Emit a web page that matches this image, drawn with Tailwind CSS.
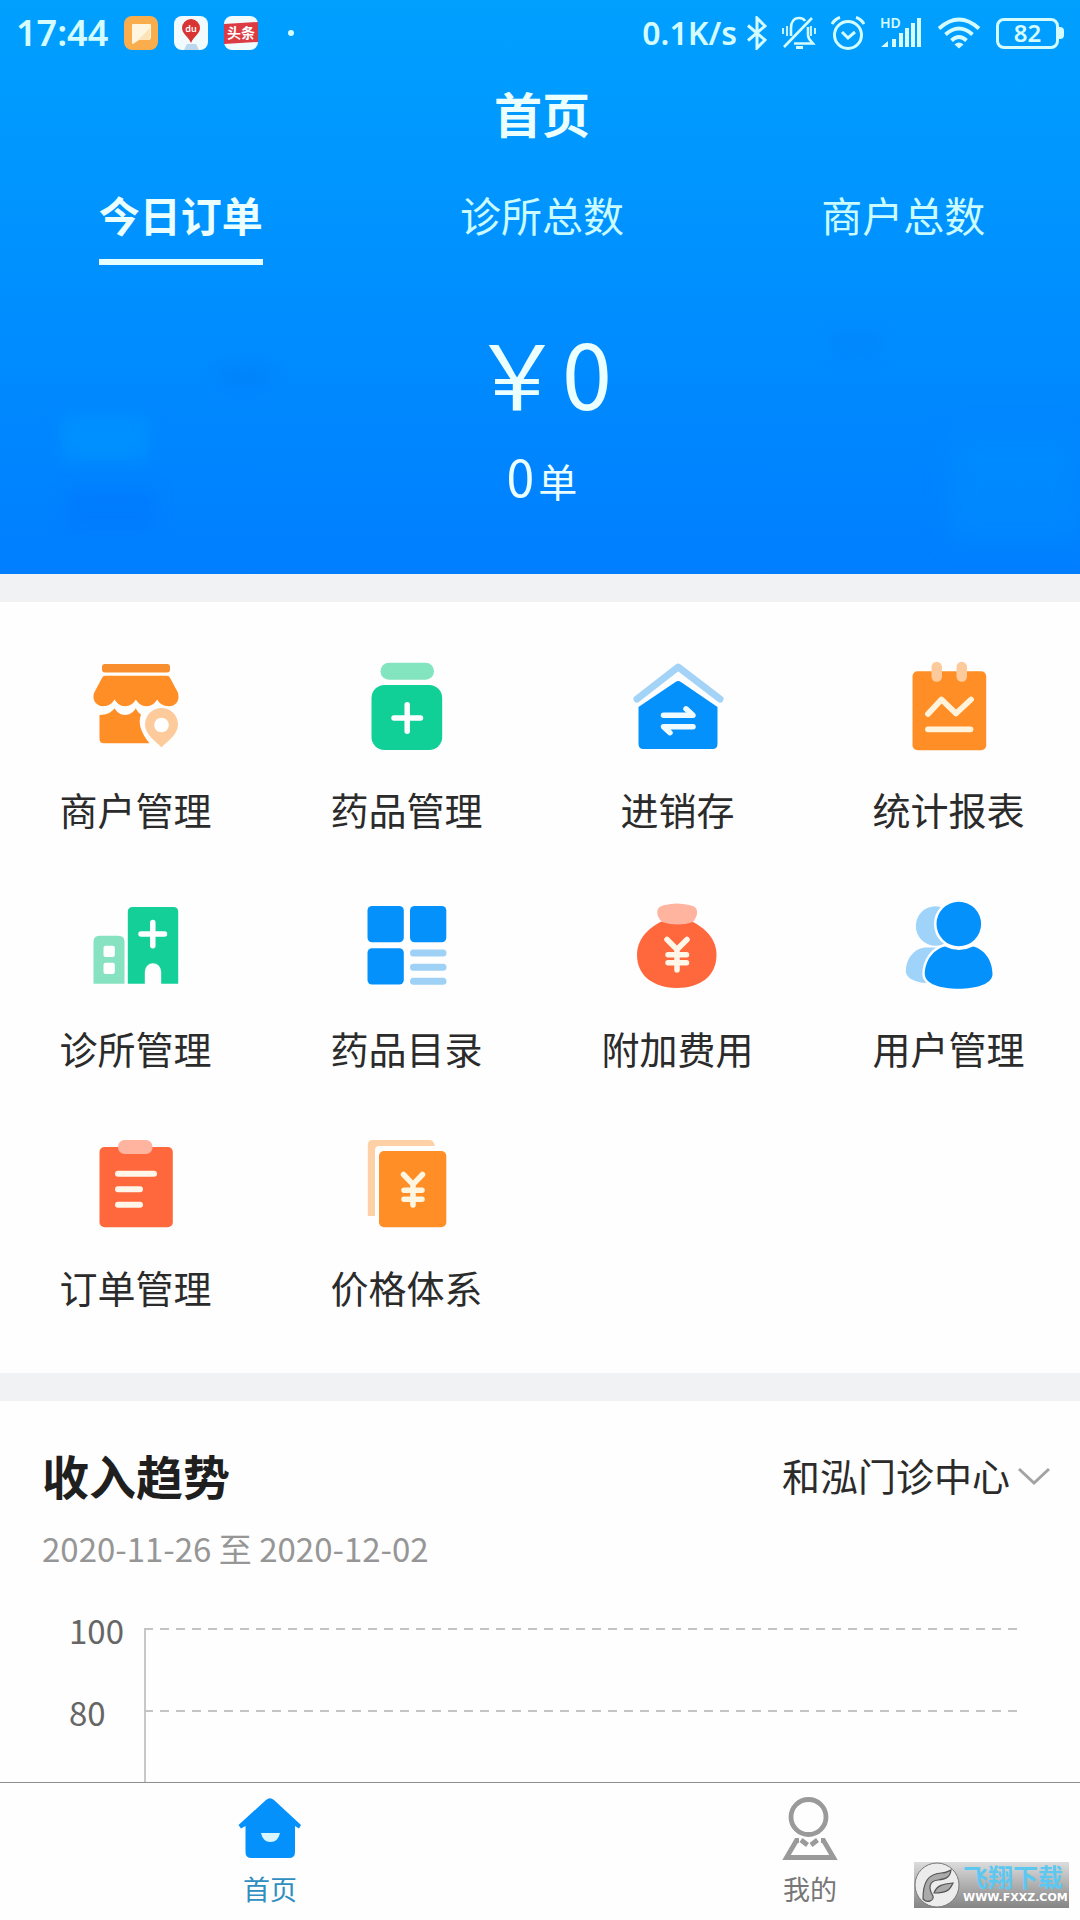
<!DOCTYPE html>
<html lang="zh-CN">
<head>
<meta charset="utf-8">
<meta name="viewport" content="width=device-width, initial-scale=1">
<title>首页</title>
<script src="https://cdn.jsdelivr.net/npm/@tailwindcss/browser@4"></script>
</head>
<body class="flex h-screen flex-col overflow-hidden bg-[#fefefe] font-['Noto_Sans_CJK_SC',sans-serif] text-[#2b2b2b]">

<header class="relative shrink-0 overflow-hidden bg-linear-to-b from-[#00a0ff] to-[#007eff] pb-[58px] text-[#ebffff]">
  <!-- soft cloud shapes behind the totals -->
  <div class="absolute top-[416px] left-[62px] h-[44px] w-[86px] bg-[#0094ff]/70 blur-sm"></div>
  <div class="absolute top-[490px] left-[66px] h-[40px] w-[90px] bg-[#0078ff]/60 blur-sm"></div>
  <div class="absolute top-[366px] left-[218px] h-[24px] w-[52px] bg-[#007dfa]/50 blur-sm"></div>
  <div class="absolute top-[332px] right-[198px] h-[20px] w-[50px] bg-[#0082fa]/50 blur-sm"></div>
  <div class="absolute top-[434px] right-0 h-[106px] w-[130px] bg-[#0090ff]/50 blur-md"></div>

  <!-- status bar -->
  <div class="relative flex h-[66px] items-center justify-between px-4 font-['Noto_Sans',sans-serif] font-semibold text-[#d4fcff]">
    <div class="flex items-center gap-4">
      <span class="text-[36px] leading-[40px]">17:44</span>
      <svg class="size-[34px]" viewBox="0 0 34 34"><rect width="34" height="34" rx="8" fill="#f9ad4c"/><path d="M8 9q0-1 1-1h17q1 0 1 1v12q0 3-3 3h-9l-6 4q-1 0-1-1z" fill="#fff6e2"/><path d="M26 12v9q0 3-3 3h-9z" fill="#fde3b8"/></svg>
      <svg class="size-[34px]" viewBox="0 0 34 34"><rect width="34" height="34" rx="8" fill="#f1fafd"/><path d="M13 28h9l3 6H10z" fill="#bcd6ee"/><path d="M17 27C15 21 8 18 8 12a9 9 0 0 1 18 0c0 6-7 9-9 15z" fill="#d93434"/><text x="17" y="16" text-anchor="middle" font-size="9" font-family="Noto Sans, sans-serif" fill="#fff">du</text></svg>
      <svg class="size-[34px]" viewBox="0 0 34 34"><rect width="34" height="34" rx="8" fill="#f1fafd"/><path d="M0 8 34 6v20L0 28z" fill="#dc3b44"/><text x="17" y="22" text-anchor="middle" font-size="14" font-weight="700" font-family="Noto Sans CJK SC, sans-serif" fill="#fff">头条</text></svg>
      <span class="ml-[14px] size-[6px] rounded-full bg-[#d4fcff]"></span>
    </div>
    <div class="flex items-center gap-[15px]">
      <div class="flex items-center gap-[10px]">
        <span class="text-[32px] leading-[40px]">0.1K/s</span>
        <svg class="h-[34px] w-5" viewBox="0 0 20 34" fill="none" stroke="currentColor" stroke-width="3"><path d="M1 9.500 18 24l-8 8V2l8 8L1 24.500"/></svg>
      </div>
      <svg class="size-[34px]" viewBox="0 0 34 34" fill="none" stroke="currentColor" stroke-width="2.600"><path d="M9 20V12c0-6 3-10 8-10 3 0 5 1 6 3M26 11v8c0 4 3 6 5 8.500H12M30 2 2 31"/><path d="M14 31.500h7" stroke-width="3"/><path d="M1 12v6M5 10v10M29 10v10M33 12v6" stroke-width="1.800"/></svg>
      <svg class="size-[34px]" viewBox="0 0 34 34" fill="none" stroke="currentColor" stroke-width="3"><circle cx="17" cy="19" r="13.500"/><path d="m11 16 6 6 7-6M1 8q3-5 8-6.500M33 8q-3-5-8-6.500"/></svg>
      <svg class="h-[34px] w-[42px] overflow-visible" viewBox="0 0 42 34" fill="currentColor"><text x="0" y="12" font-size="14" font-weight="600" font-family="Noto Sans, sans-serif">HD</text><path d="m1 31 7-6v6zM12 23h4v8h-4zM19 17h4v14h-4zM25 12h4v19h-4zM31 7h4v24h-4zM37 2h4v29h-4z"/></svg>
      <svg class="h-[34px] w-[44px]" viewBox="0 0 44 34" fill="none" stroke="currentColor" stroke-width="3.800"><path d="M2 12.500q20-18 40 0M8.500 18.500q13.500-12 27 0M14.500 24.500q7.500-7 15 0"/><path d="m17.500 28.500q4.500-4 9 0L22 32.500z" fill="currentColor" stroke="none"/></svg>
      <div class="flex items-center">
        <div class="flex h-[31px] w-[63px] items-center justify-center rounded-[8px] border-[3px] border-current text-[24px] leading-6">82</div>
        <div class="h-3 w-[5px] rounded-r-sm bg-current"></div>
      </div>
    </div>
  </div>

  <div class="relative -mr-1">
    <h1 class="text-center text-[48px] leading-[92px] font-bold">首页</h1>

    <div role="tablist" class="grid grid-cols-3 text-[41px] leading-[60px]">
      <button role="tab" aria-selected="true" class="justify-self-center border-b-[6px] border-[#e6ffff] pt-[26px] pb-[15px] font-bold">今日订单</button>
      <button role="tab" aria-selected="false" class="justify-self-center border-b-[6px] border-transparent pt-[26px] pb-[15px] text-[#c9fbff]">诊所总数</button>
      <button role="tab" aria-selected="false" class="justify-self-center border-b-[6px] border-transparent pt-[26px] pb-[15px] text-[#c9fbff]">商户总数</button>
    </div>

    <div class="pt-[46px] text-center">
      <p class="text-[90px] leading-[120px]">￥0</p>
      <p class="flex h-[85px] items-baseline justify-center gap-1 pt-1 text-[39px] leading-[80px]"><span class="text-[50px]">0</span><span>单</span></p>
    </div>
  </div>
</header>

<main class="flex min-h-0 flex-1 flex-col overflow-hidden">
  <section class="shrink-0 overflow-hidden border-y-[28px] border-[#f1f2f3] pt-[56px] pb-[39px]">
    <nav class="-mr-1 grid grid-cols-4 gap-y-[41px] text-[38px]">
      <a href="#merchant" class="flex flex-col items-center gap-2">
        <svg class="size-24" viewBox="0 0 96 96"><rect x="14" y="6" width="68" height="8.500" rx="3" fill="#f98e2e"/><path d="M17 17.700h62q2 0 3 2l8 15c2 8-2 13.500-9 13.500-6 0-10-3-11.800-6.700C67 45 63.500 48.200 58.500 48.200S50 45 47.800 41.500C46 45 42 48.200 37 48.200S29 45 26.500 41.500C24.500 45 21 48.200 15 48.200 8 48.200 4 42 6 35l8-15q1-2.300 3-2.300z" fill="#ff8e26"/><path d="M11.500 57c7 0 12-2.500 15-6.700 2.500 4 6 6.700 10.500 6.700s8.500-2.700 10.800-6.700C49.500 54 51 55 53 56.500c-3 8-1 17 8.500 28.800H16q-4.500 0-4.500-4.500z" fill="#ff8e26"/><path d="M73.500 89.500C68 83 57 77 57 66.500a16.500 16.500 0 0 1 33 0C90 77 79 83 73.500 89.500z" fill="#fdcb9b"/><circle cx="73.500" cy="67" r="7.300" fill="#fff"/></svg>
        <span class="leading-[94px]">商户管理</span>
      </a>
      <a href="#drugs" class="flex flex-col items-center gap-2">
        <svg class="size-24" viewBox="0 0 96 96"><rect x="21.500" y="4.700" width="53.500" height="17" rx="8.500" fill="#83e4c0"/><rect x="12.500" y="27" width="70.700" height="65" rx="13" fill="#10cf97"/><path d="M35 60h26.500M48.200 46.700v26.600" stroke="#fff" stroke-width="5.500" stroke-linecap="round"/></svg>
        <span class="leading-[94px]">药品管理</span>
      </a>
      <a href="#stock" class="flex flex-col items-center gap-2">
        <svg class="size-24" viewBox="0 0 96 96" fill="none" stroke-linecap="round" stroke-linejoin="round"><path d="M7 41 48.200 9 90 41" stroke="#a3d3f7" stroke-width="7"/><path d="M45.500 24q2.700-2 5.400 0L87.500 49v37q0 5-5 5h-69q-5 0-5-5V49z" fill="#0591fb"/><path d="M33.500 57.300H63l-7-6.500M63 68.700H33.500l6.500 6" stroke="#effbff" stroke-width="5.500"/></svg>
        <span class="leading-[94px]">进销存</span>
      </a>
      <a href="#reports" class="flex flex-col items-center gap-2">
        <svg class="size-24" viewBox="0 0 96 96" fill="none" stroke-linecap="round" stroke-linejoin="round"><rect x="11.500" y="13.300" width="73.700" height="79" rx="5" fill="#ff8e26"/><rect x="30.500" y="3.700" width="10.500" height="20" rx="5.200" fill="#fdcb9b"/><rect x="55.500" y="3.700" width="10.500" height="20" rx="5.200" fill="#fdcb9b"/><path d="m27 56 13.500-14.500L55 55.500l15-14M27 71.300h42.500" stroke="#fff3dc" stroke-width="5.800"/></svg>
        <span class="leading-[94px]">统计报表</span>
      </a>
      <a href="#clinics" class="flex flex-col items-center gap-2">
        <svg class="size-24" viewBox="0 0 96 96"><path d="M5.500 86.700v-42q0-6 6-6h19q6 0 6 6v42z" fill="#86e2c1"/><rect x="15.500" y="48.700" width="11.300" height="11.300" rx="2" fill="#fff"/><rect x="15.500" y="65.700" width="11.300" height="11.300" rx="2" fill="#fff"/><path d="M39.800 86.700V15q0-5 5-5h40.400q5 0 5 5v71.700H73.200V74.500a8.200 8.200 0 0 0-16.400 0v12.200z" fill="#14cf98"/><path d="M53 37h23.500M64.800 25.500v23.300" stroke="#fff" stroke-width="5.500" stroke-linecap="round"/></svg>
        <span class="leading-[94px]">诊所管理</span>
      </a>
      <a href="#catalog" class="flex flex-col items-center gap-2">
        <svg class="size-24" viewBox="0 0 96 96"><g fill="#0591fb"><rect x="8.500" y="9" width="36.300" height="36.300" rx="4.500"/><rect x="51" y="9" width="36.300" height="36.300" rx="4.500"/><rect x="8.500" y="51.300" width="36.300" height="36.300" rx="4.500"/></g><path d="M54.500 56h29.500M54.500 70.300h29.500M54.500 84.300h29.500" stroke="#9fd0f5" stroke-width="7" stroke-linecap="round"/></svg>
        <span class="leading-[94px]">药品目录</span>
      </a>
      <a href="#fees" class="flex flex-col items-center gap-2">
        <svg class="size-24" viewBox="0 0 96 96" fill="none" stroke-linecap="round" stroke-linejoin="round"><path d="M33 24C17 31 7 43 7 58c0 21 17 33 40 33s39.500-12 39.500-33c0-15-10-27-26-34z" fill="#ff673c"/><path d="M32 25c-8-9-5-16 3-17q12-3 24 0c9 1 11 8 4 17q-15 5-31 0z" fill="#ffb4a0"/><path d="m37 42.500 10 10 10-10M47 53v20M38 57.700h18.500M38 65.700h18.500" stroke="#fff6ea" stroke-width="5.500"/></svg>
        <span class="leading-[94px]">附加费用</span>
      </a>
      <a href="#users" class="flex flex-col items-center gap-2">
        <svg class="size-24" viewBox="0 0 96 96"><circle cx="34.500" cy="29" r="19.700" fill="#9fd3fa"/><path d="M4.800 74C5 61 14 50.500 26 50.500h16V86H24C12 85 4.800 80 4.800 74z" fill="#9fd3fa"/><g fill="#0591fb" stroke="#fefefe" stroke-width="5" paint-order="stroke"><path d="M44 49.500q14 7 28 0C83 52 91.500 63 91.500 77c0 10-16 14.700-34 14.700S23.800 87 23.800 77C24 63 33 52 44 49.500z"/><circle cx="57.800" cy="27" r="22.300"/></g></svg>
        <span class="leading-[94px]">用户管理</span>
      </a>
      <a href="#orders" class="flex flex-col items-center gap-2">
        <svg class="size-24" viewBox="0 0 96 96"><rect x="11.500" y="11" width="73.300" height="80.300" rx="5" fill="#ff673c"/><rect x="30" y="4" width="34.500" height="14" rx="6.500" fill="#ffb4a0"/><path d="M30 37.700h36M30 53.300h22M30 68.700h22" stroke="#fff6ea" stroke-width="6" stroke-linecap="round"/></svg>
        <span class="leading-[94px]">订单管理</span>
      </a>
      <a href="#pricing" class="flex flex-col items-center gap-2">
        <svg class="size-24" viewBox="0 0 96 96" fill="none" stroke-linecap="round" stroke-linejoin="round"><path d="M8.800 80V9q0-5 5-5h57q4 0 5 6H20q-4 0-4 4v66z" fill="#fdd0a6"/><rect x="20" y="15" width="67.300" height="76.300" rx="5" fill="#ff8e26"/><path d="m44.500 38.500 9.500 9.800 9.500-9.800M54 49v20M45 54.300h18M45 63.300h18" stroke="#fff6e2" stroke-width="5.500"/></svg>
        <span class="leading-[94px]">价格体系</span>
      </a>
    </nav>
  </section>

  <section class="flex flex-1 flex-col pt-[42px] pr-[29px] pl-[42px]">
    <div class="flex items-center justify-between">
      <h2 class="text-[47px] leading-[64px] font-bold text-[#1f1f1f]">收入趋势</h2>
      <div class="relative">
        <select aria-label="诊所" class="w-[269px] appearance-none bg-transparent pr-9 text-[38px] leading-[64px] outline-none"><option>和泓门诊中心</option></select>
        <svg class="pointer-events-none absolute top-6 right-0 h-5 w-[34px]" viewBox="0 0 34 20" fill="none" stroke="#a3a3a3" stroke-width="3"><path d="m2 2 15 14L32 2"/></svg>
      </div>
    </div>
    <p class="pt-[14px] text-[33px] leading-[54px] text-[#969696]">2020-11-26 至 2020-12-02</p>
    <!-- income chart: tick labels beside the plot area -->
    <div class="flex flex-1 pt-[25px] pr-[33px] pl-[27px] text-[33px] leading-[60px] text-[#666]">
      <div class="flex w-[75px] shrink-0 flex-col gap-[22px]"><span>100</span><span>80</span></div>
      <svg class="mt-[27px] w-full flex-1" fill="none"><path d="M1 2v400" stroke="#c8c8c8" stroke-width="2"/><g stroke="#c4c4c4" stroke-width="2" stroke-dasharray="9 7"><line x1="0" y1="2" x2="100%" y2="2"/><line x1="0" y1="84" x2="100%" y2="84"/></g></svg>
    </div>
  </section>
</main>

<nav class="relative grid h-[138px] shrink-0 grid-cols-2 border-t border-[#8f8f8f] bg-[#fefefe] text-[27px] leading-[40px]">
  <a href="#home" class="flex flex-col items-center gap-[6px] pt-3 text-[#2f8fc0]">
    <svg class="size-[68px]" viewBox="0 0 68 68"><path d="M30 5q4-3.500 8 0l27 25-2 3.500-4-2.500v26q0 6-6 6H15.500q-6 0-6-6V31L5 33.500 2.500 30z" fill="#0591fb"/><path d="M25 38h19q-2 9-9.500 9T25 38z" fill="#d9f6ff"/></svg>
    <span>首页</span>
  </a>
  <a href="#mine" class="flex flex-col items-center gap-[6px] pt-3 text-[#777]">
    <svg class="size-[68px]" viewBox="0 0 68 68" fill="none" stroke="#9a9a9a" stroke-width="4.800"><circle cx="32.500" cy="22" r="17.500"/><path d="M23 45.500h-2.500L10.500 62.500h47L47.500 45.500H45M25 45l6.500 5M41.500 45 35 50"/></svg>
    <span>我的</span>
  </a>
  <!-- site mark over the tab bar -->
  <div class="absolute right-[11px] bottom-3 flex h-[46px] w-[155px] items-center bg-linear-to-b from-[#dcdcdc] to-[#858585]">
    <svg class="size-[46px] shrink-0" viewBox="0 0 46 46"><circle cx="23" cy="23" r="22" fill="#ececec" stroke="#777"/><path d="M9 37C9 20 14 12 27 11c5 0 6-1 10-3-1 8-6 9-13 10-9 1-10 8-5 16 1 4-5 8-10 3z" fill="#aaa" stroke="#555" stroke-width="1.200"/><path d="M20 31c3-8 9-9 19-10-3 7-6 10-19 10z" fill="#aaa" stroke="#555" stroke-width="1.200"/></svg>
    <div class="flex flex-col pl-[3px]">
      <span class="text-[25px] leading-[26px] font-bold text-[#5cc8f2]">飞翔下载</span>
      <span class="font-['DejaVu_Sans',sans-serif] text-[11px] leading-[18px] font-bold text-white">WWW.FXXZ.COM</span>
    </div>
  </div>
</nav>
</body>
</html>
